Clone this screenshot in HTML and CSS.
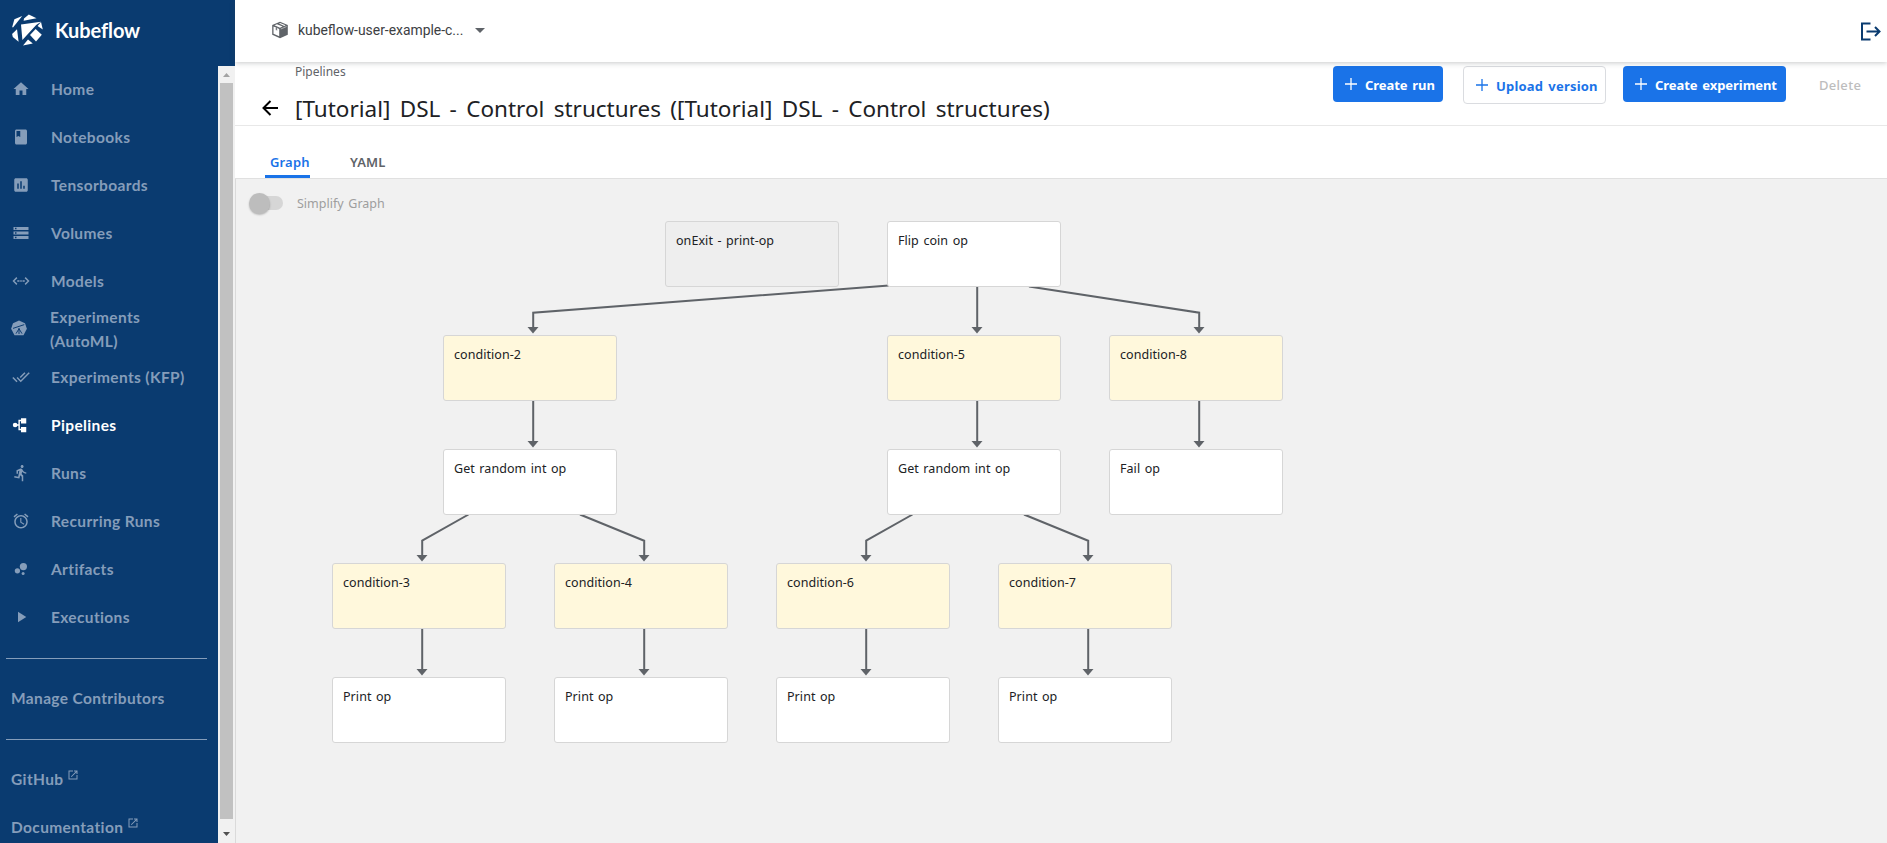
FILE: index.html
```html
<!DOCTYPE html>
<html lang="en">
<head>
<meta charset="utf-8">
<title>Kubeflow Central Dashboard</title>
<link rel="stylesheet" href="styles.css">
</head>
<body>
<div class="app">
  <aside class="sidebar">
    <div class="brand">
      <svg class="brand-logo" viewBox="12 14 31 32" width="31" height="32" fill="#fff"><path d="M24 18.4 28.8 14.5 36.5 18.2 23.6 20.7z"/><path d="M14.4 19.2 22.2 16 13 27.5 12.2 27z"/><path d="M12.1 34 17 29.2 18.6 41.8 12.800 37z"/><path d="M21 24.6 41 21.8 36.2 25 22.4 40z"/><path d="M30 35 35.6 29 41.8 34.8 36 41.4z"/><path d="M23 45.4 28 39.4 32.8 43.6z"/><path d="M41 22 42.8 29.5 37.6 26z"/></svg>
      <span class="brand-name">Kubeflow</span>
    </div>
    <div class="side-body">
      <nav class="menu">
        <a class="item"><svg viewBox="0 0 24 24"><path d="M10 20v-6h4v6h5v-8h3L12 3 2 12h3v8z"/></svg><span>Home</span></a>
        <a class="item"><svg viewBox="0 0 24 24"><path d="M18 2H6c-1.1 0-2 .9-2 2v16c0 1.1.9 2 2 2h12c1.1 0 2-.9 2-2V4c0-1.1-.9-2-2-2zM6 4h5v8l-2.500-1.500L6 12V4z"/></svg><span>Notebooks</span></a>
        <a class="item"><svg viewBox="0 0 24 24"><path d="M19 3H5c-1.100 0-2 .9-2 2v14c0 1.100.9 2 2 2h14c1.100 0 2-.9 2-2V5c0-1.100-.9-2-2-2zM9 17H7v-7h2v7zm4 0h-2V7h2v10zm4 0h-2v-4h2v4z"/></svg><span>Tensorboards</span></a>
        <a class="item"><svg viewBox="0 0 24 24"><path d="M2 20h20v-4H2v4zm2-3h2v2H4v-2zM2 4v4h20V4H2zm4 3H4V5h2v2zm-4 7h20v-4H2v4zm2-3h2v2H4v-2z"/></svg><span>Volumes</span></a>
        <a class="item"><svg viewBox="0 0 24 24"><path class="stroke" d="M6.500 7.500 2 12l4.500 4.500M17.500 7.500 22 12l-4.500 4.500M7 12h3M11 12h2M14 12h3"/></svg><span>Models</span></a>
        <a class="item item-automl"><svg viewBox="0 0 24 24"><path d="M12 2 20 5.500 22.500 13 18 21.500H6L1.500 13 4 5.500z"/><path class="cut" d="M4 12.500 19 7.500M12 12v8M12 13 8 19.500M12 13l4 6.500"/></svg><span>Experiments (AutoML)</span></a>
        <a class="item"><svg viewBox="0 0 24 24"><path d="M18 7l-1.410-1.410-6.340 6.340 1.410 1.410L18 7zm4.240-1.410L11.660 16.170 7.480 12l-1.410 1.410L11.660 19l12-12-1.420-1.410zM.410 13.410 6 19l1.410-1.410L1.830 12 .410 13.410z"/></svg><span>Experiments (KFP)</span></a>
        <a class="item active"><svg viewBox="0 0 24 24"><circle cx="4.200" cy="12" r="3.100"/><path d="M12 3h7v7h-7zM12 14.500h7v7h-7z"/><path class="stroke" d="M5 12h5M13 6H9.500v12H13"/></svg><span>Pipelines</span></a>
        <a class="item"><svg viewBox="0 0 24 24"><path d="M13.490 5.480c1.100 0 2-.9 2-2s-.9-2-2-2-2 .9-2 2 .9 2 2 2zm-3.600 13.900 1-4.400 2.100 2v6h2v-7.500l-2.100-2 .6-3c1.300 1.500 3.300 2.500 5.500 2.500v-2c-1.900 0-3.500-1-4.300-2.400l-1-1.600c-.4-.6-1-1-1.700-1-.3 0-.5.1-.8.1l-5.200 2.200v4.700h2v-3.400l1.800-.7-1.600 8.100-4.900-1-.4 2 7 1.400z"/></svg><span>Runs</span></a>
        <a class="item"><svg viewBox="0 0 24 24"><path d="M22 5.720l-4.600-3.860-1.290 1.530 4.600 3.860L22 5.720zM7.880 3.390 6.600 1.860 2 5.710l1.290 1.530 4.590-3.850zM12.500 8H11v6l4.750 2.850.75-1.230-4-2.370V8zM12 4c-4.970 0-9 4.030-9 9s4.020 9 9 9c4.970 0 9-4.030 9-9s-4.030-9-9-9zm0 16c-3.870 0-7-3.130-7-7s3.130-7 7-7 7 3.130 7 7-3.130 7-7 7z"/></svg><span>Recurring Runs</span></a>
        <a class="item"><svg viewBox="0 0 24 24"><circle cx="7.200" cy="14.400" r="3.500"/><circle cx="14.800" cy="18" r="2"/><circle cx="15.200" cy="8.800" r="4.800"/></svg><span>Artifacts</span></a>
        <a class="item"><svg viewBox="0 0 24 24"><path d="M8 5v14l11-7z"/></svg><span>Executions</span></a>
        <hr class="rule">
        <a class="item plain"><span>Manage Contributors</span></a>
        <hr class="rule">
        <a class="item plain"><span>GitHub</span><svg class="ext" viewBox="0 0 24 24"><path d="M19 19H5V5h7V3H3v18h18v-9h-2v7zM14 3v2h3.590l-9.830 9.830 1.410 1.410L19 6.410V10h2V3h-7z"/></svg></a>
        <a class="item plain"><span>Documentation</span><svg class="ext" viewBox="0 0 24 24"><path d="M19 19H5V5h7V3H3v18h18v-9h-2v7zM14 3v2h3.590l-9.830 9.830 1.410 1.410L19 6.410V10h2V3h-7z"/></svg></a>
      </nav>
      <div class="scrollbar">
        <svg class="sb-arrow" viewBox="0 0 17 17"><path d="M5 11h7L8.500 7z" fill="#a3a3a3"/></svg>
        <div class="thumb"></div>
        <svg class="sb-arrow sb-down" viewBox="0 0 17 17"><path d="M5 6h7L8.500 10z" fill="#505050"/></svg>
      </div>
    </div>
  </aside>
  <main class="main">
    <header class="topbar">
      <div class="namespace">
        <svg width="18" height="18" viewBox="0 0 18 18"><path d="M9 .8 16.800 4v9.800L9 17.200 1.200 13.800V4z" fill="#5f6368"/><path d="M2.500 5.600 8.200 8v7.300l-5.700-2.500zM3.400 4.300 6 3.200l5.600 2.400L9 6.700zM8 2.500l1-.4 5.600 2.200-1.400.6z" fill="#fff"/><path d="M4.500 6v3l1.700.7v-3M9.800 8l5.800-2.500" fill="#5f6368" stroke="#fff" stroke-width=".5"/></svg>
        <span class="ns-name">kubeflow-user-example-c...</span>
        <svg class="caret" width="10" height="5" viewBox="0 0 10 5"><path d="M0 0h10L5 5z" fill="#5f6368"/></svg>
      </div>
      <svg class="logout" width="21" height="19" viewBox="0 0 21 19" fill="none" stroke="#0a3b70" stroke-width="2"><path d="M10.500 1.500H2V17.500h8.500M6.500 9.500H19M15 5l4.500 4.500L15 14"/></svg>
    </header>
    <section class="page-head">
      <div class="crumb">Pipelines</div>
      <div class="title-row">
        <svg class="back" width="16" height="16" viewBox="0 0 16 16" fill="none" stroke="#000" stroke-width="2"><path d="M16 8H1.500M8.500 1 1.500 8l7 7"/></svg>
        <h1 class="title">[Tutorial] DSL - Control structures ([Tutorial] DSL - Control structures)</h1>
      </div>
      <div class="actions">
        <button class="btn primary run"><svg viewBox="0 0 12 12"><path d="M6 0v12M0 6h12"/></svg><span>Create run</span></button>
        <button class="btn outline"><svg viewBox="0 0 12 12"><path d="M6 0v12M0 6h12"/></svg><span>Upload version</span></button>
        <button class="btn primary exp"><svg viewBox="0 0 12 12"><path d="M6 0v12M0 6h12"/></svg><span>Create experiment</span></button>
        <button class="btn ghost"><span>Delete</span></button>
      </div>
    </section>
    <div class="tabs">
      <div class="tab on"><span>Graph</span></div>
      <div class="tab"><span>YAML</span></div>
    </div>
    <section class="canvas">
      <div class="simplify"><span class="switch"><i></i></span><span class="simplify-label">Simplify Graph</span></div>
      <svg class="edges" viewBox="236 179 1651 664" width="1651" height="664">
        <defs><path id="head" d="M-5.500-6.500h11L0 0z"/></defs>
        <g class="lines">
          <path d="M889 285.500 533.200 312.700V328"/>
          <path d="M977.200 287V328"/>
          <path d="M1029 286.500 1199.200 312.700V328"/>
          <path d="M533.200 401V442M977.200 401V442M1199.200 401V442"/>
          <path d="M468.500 514.500 422.200 540.700V556M580 514.500 644.200 540.700V556"/>
          <path d="M912.500 514.500 866.200 540.700V556M1024 514.500 1088.200 540.700V556"/>
          <path d="M422.200 629V670M644.200 629V670M866.200 629V670M1088.200 629V670"/>
        </g>
        <g class="heads">
          <use href="#head" x="533" y="333.500"/><use href="#head" x="977" y="333.500"/><use href="#head" x="1199" y="333.500"/>
          <use href="#head" x="533" y="447.500"/><use href="#head" x="977" y="447.500"/><use href="#head" x="1199" y="447.500"/>
          <use href="#head" x="422" y="561.500"/><use href="#head" x="644" y="561.500"/><use href="#head" x="866" y="561.500"/><use href="#head" x="1088" y="561.500"/>
          <use href="#head" x="422" y="675.500"/><use href="#head" x="644" y="675.500"/><use href="#head" x="866" y="675.500"/><use href="#head" x="1088" y="675.500"/>
        </g>
      </svg>
      <div class="node exit r1 c4">onExit - print-op</div>
      <div class="node r1 c6">Flip coin op</div>
      <div class="node cond r2 c2">condition-2</div>
      <div class="node cond r2 c6">condition-5</div>
      <div class="node cond r2 c8">condition-8</div>
      <div class="node r3 c2">Get random int op</div>
      <div class="node r3 c6">Get random int op</div>
      <div class="node r3 c8">Fail op</div>
      <div class="node cond r4 c1">condition-3</div>
      <div class="node cond r4 c3">condition-4</div>
      <div class="node cond r4 c5">condition-6</div>
      <div class="node cond r4 c7">condition-7</div>
      <div class="node r5 c1">Print op</div>
      <div class="node r5 c3">Print op</div>
      <div class="node r5 c5">Print op</div>
      <div class="node r5 c7">Print op</div>
    </section>
  </main>
</div>
</body>
</html>
```
FILE: styles.css
```css
* { box-sizing: border-box; }
body { margin: 0; font-family: "Noto Sans", "Open Sans", sans-serif; color: #202124; }
.app { display: flex; width: 100%; height: 843px; overflow: hidden; background: #fff; }

/* sidebar */
.sidebar { width: 235px; flex: none; background: #0a3b70; display: flex; flex-direction: column; font-family: Lato, sans-serif; }
.brand { height: 66px; flex: none; display: flex; align-items: center; padding: 0 0 6px 12px; gap: 12px; }
.brand-logo { flex: none; }
.brand-name { color: #fff; font-size: 20px; font-weight: 700; letter-spacing: -.1px; }
.side-body { flex: 1; min-height: 0; display: flex; }
.menu { width: 218px; overflow: hidden; }
.item { height: 48px; display: flex; align-items: center; padding: 0 0 2px 12px; gap: 21px; color: #859dba; font-size: 15.5px; line-height: 24px; font-weight: 700; letter-spacing: .36px; }
.item svg { width: 18px; height: 18px; flex: none; fill: currentColor; }
.item .stroke { fill: none; stroke: currentColor; stroke-width: 1.9; }
.item.active { color: #fff; }
.item-automl { padding-left: 10px; padding-right: 60px; gap: 22px; }
.item-automl svg { margin-bottom: 3px; }
.item .cut { fill: none; stroke: #0a3b70; stroke-width: 1.3; }
.item.plain { padding-left: 11px; gap: 4px; }
.item svg.ext { width: 12px; height: 12px; margin-bottom: 9px; }
.rule { margin: 16px 11px 16px 6px; border: 0; height: 1px; background: #859dba; }
.scrollbar { width: 17px; background: #f1f1f1; display: flex; flex-direction: column; }
.sb-arrow { width: 17px; height: 17px; flex: none; }
.thumb { flex: 1; margin: 0 2px; background: #c1c1c1; }
.sb-down { margin-top: 7px; }

/* header */
.main { flex: 1; min-width: 0; display: flex; flex-direction: column; }
.topbar { height: 62px; flex: none; display: flex; align-items: center; justify-content: space-between; padding: 0 6px 2px 36px; background: #fff; box-shadow: 0 1px 5px rgba(60,64,67,.28); position: relative; z-index: 2; }
.namespace { display: flex; align-items: center; }
.ns-name { margin-left: 9px; width: 165px; font-family: Roboto, sans-serif; font-size: 13.9px; color: #3c4043; white-space: nowrap; }
.caret { margin-left: 12px; }
.logout { margin-top: 2px; }
.page-head { height: 64px; flex: none; display: grid; grid-template-columns: 1fr auto; grid-template-rows: 20px 1fr; border-bottom: 1px solid #e8e8e8; padding-left: 27px; }
.crumb { grid-column: 1; padding: 1px 0 0 33px; font-size: 12px; line-height: 18px; color: #5f6368; }
.title-row { grid-column: 1; display: flex; align-items: center; gap: 17px; padding-top: 11px; }
.back { flex: none; margin-bottom: 3px; }
.title { margin: 0; font-size: 22.5px; line-height: 32px; font-weight: 400; white-space: nowrap; word-spacing: 3.5px; }
.actions { grid-column: 2; grid-row: 1 / 3; display: flex; align-items: flex-start; padding-top: 4px; }
.btn { height: 36px; display: flex; align-items: center; border: 0; border-radius: 4px; font: 700 13px "Noto Sans", sans-serif; padding: 0 0 0 12px; gap: 8px; background: none; white-space: nowrap; letter-spacing: -.06px; word-spacing: 1.5px; }
.btn span { padding-top: 1px; }
.btn svg { width: 12px; height: 12px; flex: none; fill: none; stroke: currentColor; stroke-width: 1.3; }
.primary { background: #1a73e8; color: #fff; }
.run { width: 110px; }
.outline { width: 143px; height: 38px; margin: 0 17px 0 20px; border: 1px solid #dadce0; color: #1a73e8; letter-spacing: .2px; }
.exp { width: 163px; }
.ghost { width: 101px; padding-left: 33px; color: #bdbdbd; font-weight: 500; letter-spacing: .3px; }
.tabs { height: 53px; flex: none; display: flex; align-items: flex-end; padding-left: 30px; gap: 40px; border-bottom: 1px solid #e0e0e0; font-size: 13px; font-weight: 600; letter-spacing: .15px; color: #5f6368; }
.tab { height: 35px; padding-top: 10px; line-height: 18px; border-bottom: 3px solid transparent; }
.tab.on { padding-left: 5px; width: 45px; color: #1a73e8; position: relative; border-bottom-color: #1a73e8; border-radius: 2px 2px 0 0; }

/* graph canvas */
.canvas { flex: 1; position: relative; background: #f1f1f1; border-left: 1px solid #dadada; }
.simplify { display: flex; align-items: center; gap: 12px; padding: 13px 0 0 13px; }
.switch { width: 36px; height: 22px; display: flex; align-items: center; position: relative; }
.switch::before { content: ""; width: 32px; height: 14px; margin-left: 2px; border-radius: 7px; background: #d6d6d6; }
.switch i { position: absolute; left: 0; top: 1px; width: 21px; height: 21px; border-radius: 50%; background: #bdbdbd; box-shadow: 0 1px 2px rgba(0,0,0,.25); }
.simplify-label { font-size: 12.5px; color: #9e9e9e; word-spacing: 1.5px; }
.edges { position: absolute; left: 0; top: 0; }
.lines { fill: none; stroke: #5f6368; stroke-width: 2; }
.heads { fill: #5f6368; }
.node { position: absolute; width: 174px; height: 66px; padding: 10px; border: 1px solid #d6d6d6; border-radius: 3px; background: #fff; font-size: 12.5px; line-height: 18px; letter-spacing: .06px; word-spacing: 1.2px; color: #202124; }
.cond { background: #fff8dc; }
.exit { background: #eee; }
.r1 { top: 42px; }
.r2 { top: 156px; }
.r3 { top: 270px; }
.r4 { top: 384px; }
.r5 { top: 498px; }
.c1 { left: 96px; }
.c2 { left: 207px; }
.c3 { left: 318px; }
.c4 { left: 429px; }
.c5 { left: 540px; }
.c6 { left: 651px; }
.c7 { left: 762px; }
.c8 { left: 873px; }
```
